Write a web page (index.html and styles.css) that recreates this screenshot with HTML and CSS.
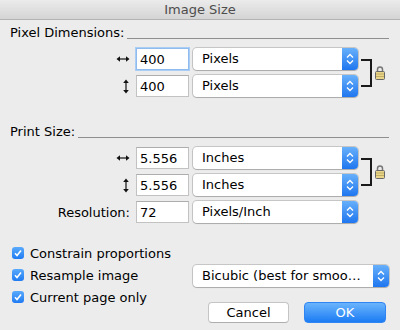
FILE: index.html
```html
<!DOCTYPE html>
<html lang="en">
<head>
    <meta charset="UTF-8">
    <title>Image Size</title>
    <link rel="stylesheet" href="styles.css">
</head>
<body>
    <div class="window">
        <div class="titlebar">Image Size</div>

        <div class="content">
            <div class="heading">Pixel Dimensions:</div>
            <div class="group">
                <div class="rows">
                    <div class="row">
                        <span class="label">
                            <svg width="14" height="8" viewBox="0 0 14 8"><path d="M3 4H11" stroke="#111" stroke-width="1.2"/><path d="M0.5 4L4 1.2V6.8Z M13.5 4L10 1.2V6.8Z" fill="#111"/></svg>
                        </span>
                        <input class="field focus" type="text" value="400">
                        <div class="select"><span class="value">Pixels</span><span class="stepper"></span></div>
                    </div>
                    <div class="row">
                        <span class="label">
                            <svg width="8" height="15" viewBox="0 0 8 15"><path d="M4 3V12" stroke="#111" stroke-width="1.2"/><path d="M4 0.5L1.2 4H6.8Z M4 14.5L1.2 11H6.8Z" fill="#111"/></svg>
                        </span>
                        <input class="field" type="text" value="400">
                        <div class="select"><span class="value">Pixels</span><span class="stepper"></span></div>
                    </div>
                </div>
                <div class="link"></div>
                <span class="lock"></span>
            </div>

            <div class="heading print">Print Size:</div>
            <div class="group">
                <div class="rows">
                    <div class="row">
                        <span class="label">
                            <svg width="14" height="8" viewBox="0 0 14 8"><path d="M3 4H11" stroke="#111" stroke-width="1.2"/><path d="M0.5 4L4 1.2V6.8Z M13.5 4L10 1.2V6.8Z" fill="#111"/></svg>
                        </span>
                        <input class="field" type="text" value="5.556">
                        <div class="select"><span class="value">Inches</span><span class="stepper"></span></div>
                    </div>
                    <div class="row">
                        <span class="label">
                            <svg width="8" height="15" viewBox="0 0 8 15"><path d="M4 3V12" stroke="#111" stroke-width="1.2"/><path d="M4 0.5L1.2 4H6.8Z M4 14.5L1.2 11H6.8Z" fill="#111"/></svg>
                        </span>
                        <input class="field" type="text" value="5.556">
                        <div class="select"><span class="value">Inches</span><span class="stepper"></span></div>
                    </div>
                </div>
                <div class="link"></div>
                <span class="lock"></span>
            </div>
            <div class="row single">
                <span class="label">Resolution:</span>
                <input class="field" type="text" value="72">
                <div class="select"><span class="value">Pixels/Inch</span><span class="stepper"></span></div>
            </div>

            <div class="options">
                <div class="checks">
                    <label class="check"><span class="box"></span>Constrain proportions</label>
                    <label class="check"><span class="box"></span>Resample image</label>
                    <label class="check"><span class="box"></span>Current page only</label>
                </div>
                <div class="side">
                    <div class="select wide"><span class="value">Bicubic (best for smoo…</span><span class="stepper"></span></div>
                    <div class="buttons">
                        <button class="button">Cancel</button>
                        <button class="button ok">OK</button>
                    </div>
                </div>
            </div>
        </div>
    </div>
</body>
</html>
```

FILE: styles.css
```css
body {
    margin: 0;
    font-family: "DejaVu Sans", sans-serif;
    font-size: 13px;
    color: #000;
    background-color: #ececec;
}

.window {
    width: 400px;
    height: 330px;
    overflow: hidden;
}

.titlebar {
    height: 19px;
    line-height: 19px;
    text-align: center;
    color: #4d4d4d;
    background: linear-gradient(#ebebeb, #d4d4d4);
    border-bottom: 1px solid #b3b3b3;
}

.content {
    padding: 5px 11px 0 10px;
}

/* titulo de seccion con la linea a la derecha */
.heading {
    display: flex;
    line-height: 16px;
}

.heading::after {
    content: "";
    flex: 1;
    height: 1px;
    background-color: #8e8e8e;
    align-self: flex-end;
    margin: 0 0 2px 3px;
}

.heading.print {
    margin-top: 27px;
}

.group {
    display: flex;
    align-items: center;
    margin-top: 7px;
}

.rows {
    display: flex;
    flex-direction: column;
    gap: 5px;
}

.row {
    display: flex;
    align-items: center;
    height: 22px;
}

.row.single {
    margin-top: 5px;
}

.label {
    width: 120px;
    margin-right: 6px;
    display: flex;
    justify-content: flex-end;
    align-items: center;
}

.field {
    width: 53px;
    height: 22px;
    box-sizing: border-box;
    margin: 0 4px 0 0;
    padding: 0 3px;
    border: 1px solid #c2c2c2;
    border-top-color: #adadad;
    background-color: #fff;
    font: inherit;
    color: #000;
    outline: none;
}

.field.focus {
    border-color: #8fbbee;
    box-shadow: 0 0 0 1px #a9cdf5;
}

.select {
    width: 165px;
    height: 22px;
    box-sizing: border-box;
    display: flex;
    align-items: stretch;
    background-color: #fff;
    border-radius: 4px;
    box-shadow: 0 0 0 1px rgba(0, 0, 0, 0.16), 0 1px 1px rgba(0, 0, 0, 0.14);
    overflow: hidden;
}

.select .value {
    flex: 1;
    padding-left: 9px;
    line-height: 22px;
    white-space: nowrap;
}

.stepper {
    width: 16px;
    background:
        url("data:image/svg+xml,%3Csvg xmlns='http://www.w3.org/2000/svg' width='16' height='22'%3E%3Cpath d='M5 9.5L8 6.5L11 9.5M5 12.5L8 15.5L11 12.5' fill='none' stroke='white' stroke-width='1.3'/%3E%3C/svg%3E") center no-repeat,
        linear-gradient(#67b0fb, #1f76ef);
}

.link {
    width: 9px;
    height: 24px;
    margin-left: 3px;
    border: 2px solid #1a1a1a;
    border-left: none;
}

.lock {
    width: 10px;
    height: 15px;
    margin-left: 3px;
    background: url("data:image/svg+xml,%3Csvg xmlns='http://www.w3.org/2000/svg' width='10' height='15'%3E%3Cpath d='M2.5 7V4.5A2.5 2.5 0 0 1 7.5 4.5V7' fill='none' stroke='%23777' stroke-width='1.5'/%3E%3Crect x='0.5' y='6.5' width='9' height='8' rx='1' fill='%23e9d58a' stroke='%23666'/%3E%3Cpath d='M1 9H9M1 11.5H9' stroke='%23b8a258' stroke-width='0.8'/%3E%3C/svg%3E") no-repeat;
}

.options {
    display: flex;
    margin-top: 19px;
}

.checks {
    padding-left: 2px;
}

.check {
    display: flex;
    align-items: center;
    gap: 6px;
    height: 22px;
}

.box {
    width: 12px;
    height: 12px;
    border-radius: 3px;
    background:
        url("data:image/svg+xml,%3Csvg xmlns='http://www.w3.org/2000/svg' width='12' height='12'%3E%3Cpath d='M3 6.3L5 8.5L9 3.5' fill='none' stroke='white' stroke-width='1.6'/%3E%3C/svg%3E") center no-repeat,
        linear-gradient(#5aaafc, #1f7bf3);
}

.side {
    margin-left: auto;
    width: 196px;
}

.select.wide {
    width: 196px;
    margin-top: 23px;
}

.buttons {
    display: flex;
    justify-content: flex-end;
    gap: 15px;
    margin-top: 15px;
    padding-right: 3px;
}

.button {
    width: 81px;
    height: 21px;
    padding: 0;
    border: 1px solid #c4c4c4;
    border-bottom-color: #aeaeae;
    border-radius: 4px;
    background-color: #fff;
    font: inherit;
    color: #000;
}

.button.ok {
    width: 82px;
    border: 1px solid #2f86f2;
    background: linear-gradient(#6ab4fc, #1c7cf4);
    color: #fff;
}
```
